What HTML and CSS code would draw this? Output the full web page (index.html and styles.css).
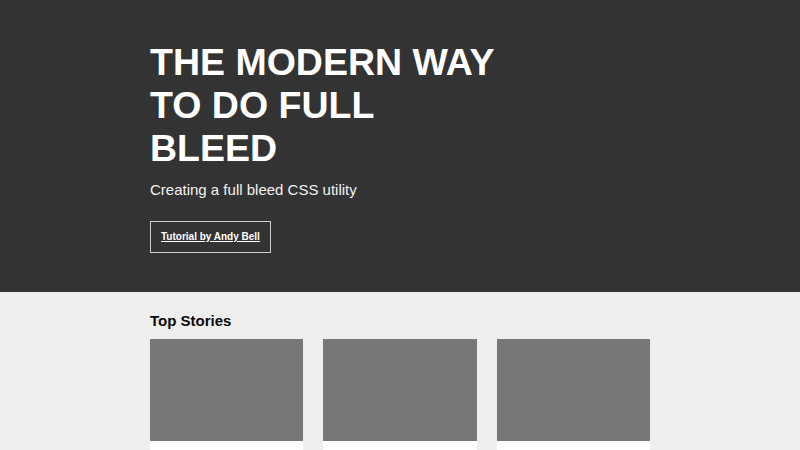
FILE: index.html
```html
<!DOCTYPE html>
<html lang="en">
<head>
<meta charset="utf-8">
<title>The modern way to do full bleed</title>
<link rel="stylesheet" href="styles.css">
</head>
<body>
<main class="wrapper">
  <header class="hero full-bleed">
    <div class="hero__inner">
      <h1 class="hero__title">The modern way<br>to do full<br>bleed</h1>
      <p class="hero__summary">Creating a full bleed CSS utility</p>
      <a class="hero__link" href="#">Tutorial by Andy Bell</a>
    </div>
  </header>
  <section class="stories full-bleed">
    <div class="stories__inner">
      <h2 class="stories__title">Top Stories</h2>
      <div class="stories__grid">
        <article class="card"><div class="card__image"></div><div class="card__body"></div></article>
        <article class="card"><div class="card__image"></div><div class="card__body"></div></article>
        <article class="card"><div class="card__image"></div><div class="card__body"></div></article>
      </div>
    </div>
  </section>
</main>
</body>
</html>
```
FILE: styles.css
```css
* { box-sizing: border-box; }
html, body { margin: 0; padding: 0; }
body {
  font-family: "Liberation Sans", Arial, sans-serif;
  background: #eeeeee;
  color: #111;
}
.hero {
  background: #333333;
  color: #ffffff;
  padding: 41px 0 39px;
}
.hero__inner, .stories__inner {
  width: 500px;
  margin: 0 auto;
}
.hero__title {
  margin: 0;
  font-size: 37.5px;
  line-height: 43px;
  font-weight: 700;
  text-transform: uppercase;
}
.hero__summary {
  margin: 9px 0 20px;
  font-size: 15px;
  line-height: 22px;
  color: #f2f2f2;
}
.hero__link {
  display: inline-block;
  padding: 9px 10px;
  border: 1px solid #cfcfcf;
  color: #ffffff;
  font-size: 10px;
  line-height: 12px;
  font-weight: 700;
  text-decoration: underline;
}
.stories {
  padding: 20px 0 40px;
}
.stories__title {
  margin: 0 0 9px;
  font-size: 15px;
  line-height: 18px;
  font-weight: 700;
  color: #0a0a0a;
}
.stories__grid {
  display: grid;
  grid-template-columns: repeat(3, 1fr);
  gap: 20px;
}
.card {
  background: #ffffff;
}
.card__image {
  aspect-ratio: 3 / 2;
  background: #777777;
}
.card__body {
  height: 80px;
}
```
